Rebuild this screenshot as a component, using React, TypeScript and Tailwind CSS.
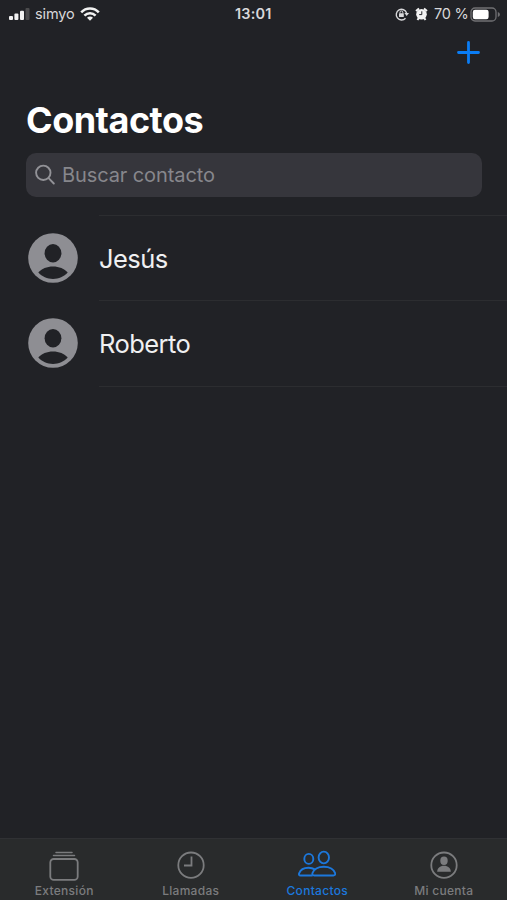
import { useState } from "react";

type Contact = {
  id: number;
  name: string;
};

const contacts: Contact[] = [
  { id: 1, name: "Jesús" },
  { id: 2, name: "Roberto" },
];

function StatusBar() {
  return (
    <div className="relative flex h-7 shrink-0 items-center justify-between pl-[9px] pr-[6px] text-[#d8d8da]">
      <div className="flex items-center">
        <svg width="21" height="12" viewBox="0 0 21 12" fill="#f2f2f2">
          <rect x="0" y="8" width="4" height="4" rx="1" />
          <rect x="5.4" y="5.6" width="4" height="6.4" rx="1" />
          <rect x="11" y="2.8" width="4" height="9.2" rx="1" />
          <rect x="16.5" y="0" width="4" height="12" rx="1" fill="#4b4b4d" />
        </svg>
        <span className="ml-[5px] w-[40px] whitespace-nowrap text-[14.5px] leading-7 tracking-[-0.1px]">simyo</span>
        <svg className="ml-[5px]" width="20" height="14" viewBox="0 0 20 14" fill="none" stroke="#f2f2f2" strokeWidth="2.5">
          <path d="M1.2 5.3C6 .1 14 .1 18.8 5.3" />
          <path d="M4.4 8.6c3.1-3.2 8.1-3.2 11.2 0" />
          <path d="M10 13.7 7 10.7c1.7-1.6 4.3-1.6 6 0z" fill="#f2f2f2" stroke="none" />
        </svg>
      </div>

      <span className="absolute left-[235px] top-0 text-[14.5px] font-semibold leading-7 tracking-[0.2px]">13:01</span>

      <div className="flex items-center">
        {/* Rotation lock */}
        <svg width="14" height="14" viewBox="0 0 14 14" fill="none">
          <path d="M10.5 11.2A5.3 5.3 0 1 1 11.6 6" stroke="#d8d8da" strokeWidth="1.4" />
          <path d="M9.4 5.9H14l-2.3 3.2z" fill="#d8d8da" />
          <rect x="4" y="6.3" width="4.8" height="3.7" rx="0.6" fill="#d8d8da" />
          <path d="M5 6.5V5.3a1.4 1.4 0 0 1 2.8 0v1.2" stroke="#d8d8da" />
        </svg>
        {/* Alarm */}
        <svg className="ml-[6px]" width="13" height="14" viewBox="0 0 13 14" fill="none">
          <circle cx="6.5" cy="7.3" r="5.3" fill="#f2f2f2" />
          <path d="M1 4 4 1.5M12 4 9 1.5M2.5 13l1.3-2M10.5 13l-1.3-2" stroke="#f2f2f2" strokeWidth="2" />
          <path d="M6.8 4.3v3.3H4.2" stroke="#212226" strokeWidth="1" />
        </svg>
        <span className="ml-[6px] w-[34px] whitespace-nowrap text-[14.5px] leading-7 tracking-[-0.25px]">70 %</span>
        <svg className="ml-[2px]" width="31" height="15" viewBox="0 0 31 15" fill="none">
          <rect x="1" y="1" width="25" height="13" rx="4" stroke="#707073" strokeWidth="1.3" />
          <rect x="2.8" y="2.8" width="15.8" height="9.4" rx="2.2" fill="#fff" />
          <path d="M27.8 5v5c1.4-.5 2.1-1.4 2.1-2.5S29.2 5.5 27.8 5z" fill="#707073" />
        </svg>
      </div>
    </div>
  );
}

function Avatar() {
  return (
    <svg className="mb-px" width="50" height="50" viewBox="0 0 50 50">
      <circle cx="25" cy="25" r="24.8" fill="#8e8e93" />
      <ellipse cx="25" cy="20.2" rx="8.4" ry="9.2" fill="#212226" />
      <path d="M10.3 39.6C13.5 35.8 19 33.5 25 33.5s11.5 2.3 14.7 6.1C36 43.7 30.8 46 25 46s-11-2.3-14.7-6.4z" fill="#212226" />
    </svg>
  );
}

function ExtensionIcon() {
  return (
    <svg width="30" height="32" viewBox="0 0 30 32" fill="none" stroke="currentColor" strokeWidth="1.5" strokeLinecap="round">
      <path d="M7 2.5h16M4.5 5.5h21" />
      <rect x="1.3" y="9" width="27.4" height="20.9" rx="3.4" strokeWidth="1.8" />
    </svg>
  );
}

function CallsIcon() {
  return (
    <svg width="28" height="32" viewBox="0 0 28 32" fill="none" stroke="currentColor" strokeWidth="1.8">
      <circle cx="14" cy="15.2" r="12.7" />
      <path d="M14.5 6.5v9H7" />
    </svg>
  );
}

function ContactsIcon() {
  return (
    <svg width="38" height="32" viewBox="0 0 38 32" fill="none" stroke="currentColor" strokeWidth="1.9" strokeLinejoin="round">
      <ellipse cx="10.8" cy="8.9" rx="4.5" ry="5" />
      <ellipse cx="25.8" cy="7.5" rx="5.2" ry="5.9" />
      <path d="M14.7 25.5H2.6C.9 25.5.7 24.5 1.2 23.2 2.3 20 5.8 17.7 10.5 17.7c2.6 0 4.6.6 6.2 1.7" />
      <path d="M25.8 16.7c5.9 0 10.2 2.8 11.3 6.4.4 1.400-.1 2.400-1.800 2.400H16.300c-1.700 0-2.200-1-1.800-2.400 1.100-3.600 5.400-6.400 11.300-6.400z" />
    </svg>
  );
}

function AccountIcon() {
  return (
    <svg width="28" height="32" viewBox="0 0 28 32" fill="currentColor">
      <circle cx="14" cy="15.2" r="12.7" fill="none" stroke="currentColor" strokeWidth="1.8" />
      <ellipse cx="14" cy="10.8" rx="3.7" ry="4.2" />
      <path d="M7.2 21.8c0-3.500 2.800-6 6.800-6s6.800 2.500 6.800 6z" />
    </svg>
  );
}

const tabs = [
  { id: "extension", label: "Extensión", icon: ExtensionIcon },
  { id: "calls", label: "Llamadas", icon: CallsIcon },
  { id: "contacts", label: "Contactos", icon: ContactsIcon },
  { id: "account", label: "Mi cuenta", icon: AccountIcon },
];

export default function App() {
  const [activeTab, setActiveTab] = useState("contacts");
  const [searchQuery, setSearchQuery] = useState("");

  const filteredContacts = contacts.filter(c =>
    c.name.toLowerCase().includes(searchQuery.toLowerCase())
  );

  return (
    <div className="flex h-screen flex-col overflow-hidden bg-[#212226] font-['Inter',sans-serif] text-white">
      <StatusBar />

      <div className="flex h-12 shrink-0 items-center justify-end pr-[27px]">
        <button aria-label="Añadir contacto">
          <svg width="23" height="23" viewBox="0 0 23 23" stroke="#0a7df5" strokeWidth="2.8" strokeLinecap="round">
            <path d="M11.5 1.5v20M1.5 11.5h20" />
          </svg>
        </button>
      </div>

      <h1 className="mt-[22px] pl-[26px] text-[36px] font-bold leading-[44px] tracking-[-0.5px]">Contactos</h1>

      {/* Search bar */}
      <div className="ml-[26px] mr-[25px] mt-[11px] flex h-11 shrink-0 items-center rounded-[10px] bg-[#36363c] pl-[9px]">
        <svg className="mb-px" width="20" height="21" viewBox="0 0 20 21" fill="none" stroke="#929297" strokeWidth="1.9" strokeLinecap="round">
          <circle cx="8.3" cy="8.8" r="7.2" />
          <path d="m13.6 14.2 5.2 5.3" />
        </svg>
        <input
          type="text"
          placeholder="Buscar contacto"
          value={searchQuery}
          onChange={e => setSearchQuery(e.target.value)}
          className="ml-[7px] min-w-0 flex-1 bg-transparent text-[20px] tracking-[-0.1px] outline-none placeholder:text-[#87878c]"
        />
      </div>

      <div className="mt-[18px] flex-1">
        <div className="ml-[99px] h-px bg-[#2c2d30]" />
        {filteredContacts.map(contact => (
          <div key={contact.id} className="flex h-[85.3px] items-center pl-7">
            <Avatar />
            <div className="ml-[21px] flex h-full flex-1 items-center border-b border-[#2c2d30] pt-px text-[25.5px] tracking-[-0.55px] text-[#f0f0f1]">
              {contact.name}
            </div>
          </div>
        ))}
      </div>

      {/* Tab bar */}
      <div className="flex h-[62px] shrink-0 border-t border-[#303134] bg-[#292b2c] pl-px">
        {tabs.map(({ id, label, icon: Icon }) => (
          <button
            key={id}
            onClick={() => setActiveTab(id)}
            className={`flex flex-1 flex-col items-center pt-[11px] ${activeTab === id ? "text-[#1c78dc]" : "text-[#7b7c7e]"}`}
          >
            <Icon />
            <span className="mt-px text-[12px] font-medium leading-4 tracking-[0.3px]">{label}</span>
          </button>
        ))}
      </div>
    </div>
  );
}
